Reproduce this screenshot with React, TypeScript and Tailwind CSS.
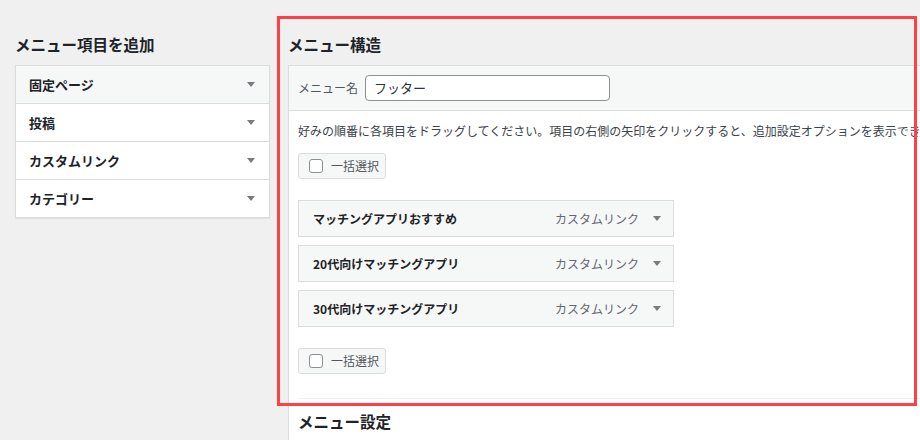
import React from "react";

const font = "font-['Noto_Sans_CJK_JP','Noto_Sans',sans-serif]";

function Caret({ color = "#787c82" }: { color?: string }) {
  return (
    <span
      className="inline-block w-0 h-0 border-l-[4px] border-r-[4px] border-t-[5px] border-l-transparent border-r-transparent"
      style={{ borderTopColor: color }}
    />
  );
}

function AddRow({ label, first }: { label: string; first?: boolean }) {
  return (
    <div
      className={`flex items-center justify-between pl-[13px] pr-[14px] ${
        first ? "h-[37px] bg-[#f6f7f7]" : "h-[38px] bg-white border-t border-[#dcdcde]"
      }`}
    >
      <span className="text-[13px] font-semibold text-[#1d2327]">{label}</span>
      <Caret />
    </div>
  );
}

function BulkSelect() {
  return (
    <div className="w-[88px] h-[26px] flex items-center gap-[8px] pl-[10px] bg-[#f6f7f7] border border-[#dcdcde] rounded-[3px]">
      <span className="w-[14px] h-[14px] border border-[#8c8f94] rounded-[3px] bg-white" />
      <span className="text-[12px] text-[#50575e]">一括選択</span>
    </div>
  );
}

function MenuItem({ title }: { title: string }) {
  return (
    <div className="w-[376px] h-[37px] flex items-center justify-between pl-[14px] pr-[12px] bg-[#f6f7f7] border border-[#dcdcde]">
      <span className="text-[12px] font-semibold text-[#1d2327]">{title}</span>
      <div className="flex items-center gap-[14px]">
        <span className="text-[12px] text-[#646970]">カスタムリンク</span>
        <Caret />
      </div>
    </div>
  );
}

export default function App() {
  return (
    <div className={`relative w-[920px] h-[440px] overflow-hidden bg-[#f0f0f1] ${font}`}>
      <div className="flex pt-[33px] pl-[15px] gap-[18px]">
        {/* left column */}
        <div className="w-[255px] shrink-0">
          <h2 className="h-[22px] leading-[22px] mb-[10px] text-[15.5px] font-bold text-[#1d2327]">
            メニュー項目を追加
          </h2>
          <div className="border border-[#dcdcde] shadow-[0_1px_1px_rgba(0,0,0,0.05)]">
            <AddRow label="固定ページ" first />
            <AddRow label="投稿" />
            <AddRow label="カスタムリンク" />
            <AddRow label="カテゴリー" />
          </div>
        </div>

        {/* right column */}
        <div className="w-[700px] shrink-0">
          <h2 className="h-[22px] leading-[22px] mb-[10px] text-[15.5px] font-bold text-[#1d2327]">
            メニュー構造
          </h2>
          <div className="border-l border-t border-[#dcdcde] bg-white h-[400px]">
            <div className="h-[45px] flex items-center gap-[7px] pl-[9px] bg-[#f6f7f7] border-b border-[#dcdcde]">
              <span className="text-[12px] text-[#50575e]">メニュー名</span>
              <div className="w-[245px] h-[26px] flex items-center pl-[8px] bg-white border border-[#8c8f94] rounded-[4px]">
                <span className="text-[13px] text-[#2c3338]">フッター</span>
              </div>
            </div>
            <div className="pl-[9px] pt-[11px]">
              <p className="text-[12px] leading-[18px] text-[#3c434a] whitespace-nowrap">
                好みの順番に各項目をドラッグしてください。項目の右側の矢印をクリックすると、追加設定オプションを表示できます。
              </p>
              <div className="mt-[13px]">
                <BulkSelect />
              </div>
              <div className="mt-[21px] flex flex-col gap-[8px]">
                <MenuItem title="マッチングアプリおすすめ" />
                <MenuItem title="20代向けマッチングアプリ" />
                <MenuItem title="30代向けマッチングアプリ" />
              </div>
              <div className="mt-[21px]">
                <BulkSelect />
              </div>
              <div className="mt-[24px] h-[1px] bg-[#f0f0f1]" />
              <h3 className="mt-[11px] h-[22px] leading-[22px] text-[15.5px] font-bold text-[#1d2327]">
                メニュー設定
              </h3>
            </div>
          </div>
        </div>
      </div>

      {/* red highlight annotation */}
      <div className="absolute left-[277px] top-[16px] w-[640px] h-[390px] border-[3px] border-[#ff4045]" />
    </div>
  );
}
